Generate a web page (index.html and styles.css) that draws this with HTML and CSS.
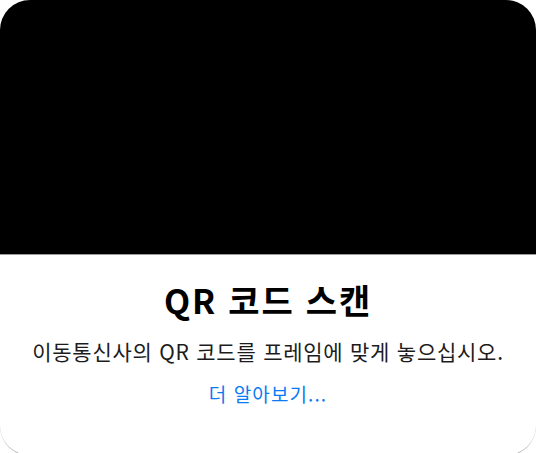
FILE: index.html
```html
<!DOCTYPE html>
<html lang="ko">
<head>
<meta charset="utf-8">
<link rel="stylesheet" href="styles.css">
</head>
<body>
<div class="card">
  <div class="camera"></div>
  <div class="content">
    <h1 class="title">QR 코드 스캔</h1>
    <p class="subtitle">이동통신사의 QR 코드를 프레임에 맞게 놓으십시오.</p>
    <a class="link" href="#">더 알아보기...</a>
  </div>
</div>
</body>
</html>
```
FILE: styles.css
```css
html, body {
  margin: 0;
  padding: 0;
  background: #ffffff;
}
body {
  width: 536px;
  height: 453px;
  overflow: hidden;
  font-family: "Noto Sans CJK KR", "Noto Sans", sans-serif;
}
.card {
  box-sizing: border-box;
  width: 536px;
  height: 456px;
  border-radius: 30px;
  border-bottom: 1.5px solid #b8b8b8;
  overflow: hidden;
  background: #ffffff;
  display: flex;
  flex-direction: column;
}
.camera {
  height: 254px;
  background: #000000;
  border-bottom: 1px solid #9a9a9a;
  flex: none;
}
.content {
  display: flex;
  flex-direction: column;
  align-items: center;
  padding-top: 23px;
}
.title {
  margin: 0;
  font-size: 34px;
  font-weight: 700;
  line-height: 44px;
  letter-spacing: 1.8px;
  color: #000;
}
.subtitle {
  margin: 14px 0 0 0;
  font-size: 21px;
  line-height: 30px;
  letter-spacing: 0.75px;
  color: #1c1c1c;
}
.link {
  margin-top: 15px;
  font-size: 19px;
  line-height: 26px;
  letter-spacing: 1.1px;
  color: #0a7bf2;
  text-decoration: none;
}
```
